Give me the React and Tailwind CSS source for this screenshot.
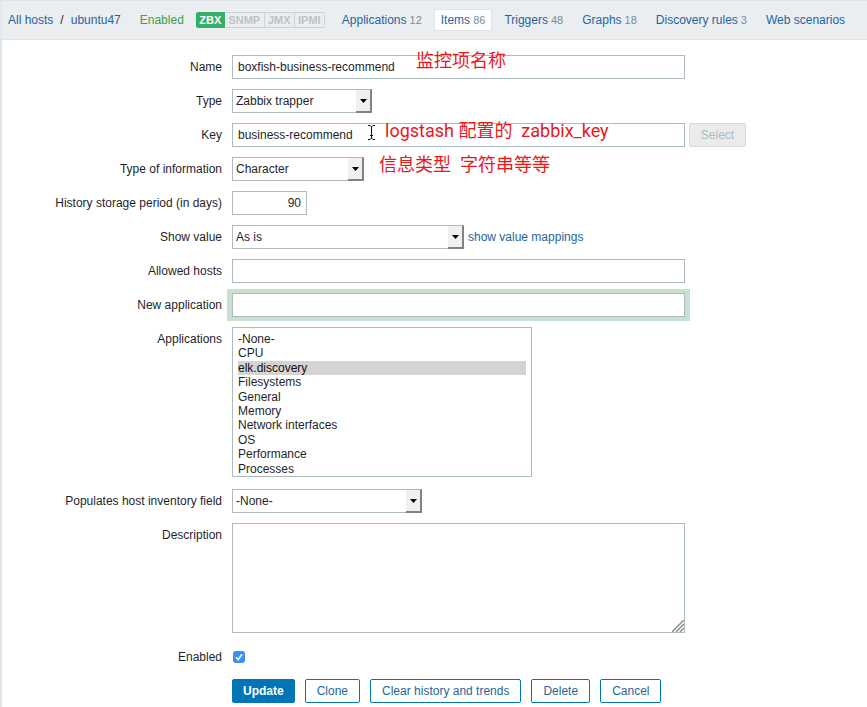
import React from "react";

const tabs = [
  { name: "Applications", count: 12 },
  { name: "Items", count: 86, current: true },
  { name: "Triggers", count: 48 },
  { name: "Graphs", count: 18 },
  { name: "Discovery rules", count: 3 },
  { name: "Web scenarios" },
];

const applications = [
  "-None-",
  "CPU",
  "elk.discovery",
  "Filesystems",
  "General",
  "Memory",
  "Network interfaces",
  "OS",
  "Performance",
  "Processes",
];

const boxClass =
  "block h-6 rounded-none border border-[#acbbc2] bg-white px-[5px] text-xs text-[#1f1f2b] outline-none";

const noteClass =
  "pointer-events-none absolute whitespace-pre font-[Roboto,'Noto_Sans_CJK_SC',sans-serif] text-[18px] leading-6 text-[#e8191c]";

function Row({ label, htmlFor, children }) {
  return (
    <div className="flex items-start gap-[10px]">
      <label htmlFor={htmlFor} className="w-[220px] shrink-0 text-right leading-6">
        {label}
      </label>
      <div className="relative flex min-w-0 grow items-start gap-1">{children}</div>
    </div>
  );
}

function Dropdown({ id, value, width }) {
  return (
    <div className={"relative " + width}>
      <select
        id={id}
        defaultValue={value}
        className="block h-6 w-full appearance-none rounded-none border border-[#acbbc2] bg-white pr-5 pl-[3px] text-xs text-[#1f1f2b] outline-none"
      >
        <option>{value}</option>
      </select>
      <span className="pointer-events-none absolute inset-y-0 right-0 flex w-4 items-center justify-center border-t border-r-2 border-b-2 border-t-[#acbbc2] border-r-[#808386] border-b-[#808386] bg-[#f0f0f0]">
        <svg width="7" height="4" viewBox="0 0 7 4" aria-hidden="true">
          <path d="M0 0h7L3.5 4z" fill="#000" />
        </svg>
      </span>
    </div>
  );
}

function Button({ children }) {
  return (
    <button
      type="button"
      className="h-6 rounded-xs border border-[#0275b8] bg-white px-[11px] text-xs text-[#1f65a0]"
    >
      {children}
    </button>
  );
}

export default function App() {
  return (
    <div className="min-h-screen border-l-2 border-[#e3e7ea] bg-white font-['Liberation_Sans',Arial,sans-serif] text-xs text-[#1f1f2b]">
      <header className="flex h-10 items-center border-y border-[#dfe4e7] bg-[#ebeef0] pl-[6px] whitespace-nowrap">
        <nav aria-label="Host" className="flex gap-[7px]">
          <a href="#hosts" className="text-[#1f65a0]">All hosts</a>
          <span>/</span>
          <a href="#host" className="text-[#1f65a0]">ubuntu47</a>
        </nav>
        <span className="ml-[19px] text-[#429e47]">Enabled</span>
        <div className="ml-3 flex h-4 text-center text-[11px] leading-[14px] text-[#bcc3c7]">
          <span className="w-[29px] rounded-l-xs border border-[#34af67] bg-[#34af67] font-bold text-white">ZBX</span>
          <span className="w-10 border border-l-0 border-[#ccd2d5] font-bold">SNMP</span>
          <span className="w-[30px] border border-l-0 border-[#ccd2d5] font-bold">JMX</span>
          <span className="w-[30px] rounded-r-xs border border-l-0 border-[#ccd2d5] font-bold">IPMI</span>
        </div>
        <nav aria-label="Host configuration" className="ml-[10px] flex gap-[5px]">
          {tabs.map((tab) => (
            <a
              key={tab.name}
              href="#tab"
              className={
                "border px-[6px] leading-5 text-[#1f65a0] " +
                (tab.current ? "border-[#dfe4e7] bg-white" : "border-transparent")
              }
            >
              {tab.name}
              {tab.count && <span className="ml-[3px] text-[11px] text-[#768d99]">{tab.count}</span>}
            </a>
          ))}
        </nav>
      </header>

      <form className="flex flex-col gap-3 pt-[15px] pb-1">
        <div className="flex flex-col gap-[10px]">
          <Row label="Name" htmlFor="name">
            <input id="name" defaultValue="boxfish-business-recommend" className={boxClass + " w-full max-w-[453px]"} />
            <span className={noteClass + " -top-[6px] left-[184px]"}>监控项名称</span>
          </Row>
          <Row label="Type" htmlFor="type">
            <Dropdown id="type" value="Zabbix trapper" width="w-[140px]" />
          </Row>
          <Row label="Key" htmlFor="key">
            <input id="key" defaultValue="business-recommend" className={boxClass + " w-full max-w-[453px]"} />
            <button
              type="button"
              disabled
              className="h-6 w-[57px] shrink-0 rounded-xs border border-[#d5dadd] bg-[#ebebeb] text-xs text-[#acbbc2]"
            >
              Select
            </button>
            <svg className="absolute top-[1px] left-[135px]" width="9" height="17" viewBox="0 0 9 17" aria-hidden="true">
              <path
                d="M1 1.500h2L4.500 3 6 1.500h2M4.500 3v11M1 15.500h2L4.500 14 6 15.500h2M3 11.500h3"
                fill="none"
                stroke="#111"
              />
            </svg>
            <span className={noteClass + " -top-1 left-[153px]"}>{"logstash 配置的  zabbix_key"}</span>
          </Row>
          <Row label="Type of information" htmlFor="info">
            <Dropdown id="info" value="Character" width="w-[132px]" />
            <span className={noteClass + " -top-1 left-[147px]"}>{"信息类型  字符串等等"}</span>
          </Row>
          <Row label="History storage period (in days)" htmlFor="history">
            <input id="history" defaultValue="90" className={boxClass + " w-[75px] text-right"} />
          </Row>
          <Row label="Show value" htmlFor="show">
            <Dropdown id="show" value="As is" width="w-[232px]" />
            <a href="#mappings" className="leading-6 text-[#1f65a0]">show value mappings</a>
          </Row>
          <Row label="Allowed hosts" htmlFor="allowed">
            <input id="allowed" className={boxClass + " w-full max-w-[453px]"} />
          </Row>
          <Row label="New application" htmlFor="newapp">
            <input
              id="newapp"
              className={boxClass + " w-full max-w-[453px] shadow-[1px_0_0_4px_#c8e1cc,-1px_0_0_4px_#c8e1cc]"}
            />
          </Row>
          <Row label="Applications" htmlFor="apps">
            <select
              id="apps"
              multiple
              size={10}
              defaultValue={["elk.discovery"]}
              className="h-[150px] w-[300px] rounded-none border border-[#acbbc2] bg-white px-[5px] pt-1 pb-0 text-xs text-[#1f1f2b] outline-none [scrollbar-width:none]"
            >
              {applications.map((name) => (
                <option
                  key={name}
                  className="p-0 leading-[14px] checked:bg-[linear-gradient(#d4d4d4,#d4d4d4)]"
                >
                  {name}
                </option>
              ))}
            </select>
          </Row>
        </div>

        <div className="flex flex-col gap-[10px]">
          <Row label="Populates host inventory field" htmlFor="inventory">
            <Dropdown id="inventory" value="-None-" width="w-[190px]" />
          </Row>
          <Row label="Description" htmlFor="description">
            <div className="relative w-full max-w-[453px]">
              <textarea
                id="description"
                className="block h-[110px] w-full resize-none border border-[#acbbc2] bg-white p-1 outline-none"
              />
              <svg className="absolute right-px bottom-px" width="12" height="12" viewBox="0 0 12 12" aria-hidden="true">
                <path d="M0 12L12 0M4 12L12 4M8 12L12 8" stroke="#8c8c8c" strokeWidth="1.500" fill="none" />
              </svg>
            </div>
          </Row>
        </div>

        <div className="flex flex-col gap-[10px]">
          <Row label="Enabled" htmlFor="enabled">
            <span className="relative mt-[6px] ml-px block size-3">
              <input
                id="enabled"
                type="checkbox"
                defaultChecked
                className="block size-3 appearance-none rounded-[3px] bg-[#3b8ff3]"
              />
              <svg className="pointer-events-none absolute inset-0" width="12" height="12" viewBox="0 0 12 12" aria-hidden="true">
                <path d="M3 6.300L5.200 8.700 9 3.300" fill="none" stroke="#fff" strokeWidth="1.600" />
              </svg>
            </span>
          </Row>
          <div className="flex gap-[10px] pl-[230px]">
            <button
              type="submit"
              className="h-6 rounded-xs border border-[#0275b8] bg-[#0275b8] px-[10px] text-xs font-bold text-white"
            >
              Update
            </button>
            <Button>Clone</Button>
            <Button>Clear history and trends</Button>
            <Button>Delete</Button>
            <Button>Cancel</Button>
          </div>
        </div>
      </form>
    </div>
  );
}
